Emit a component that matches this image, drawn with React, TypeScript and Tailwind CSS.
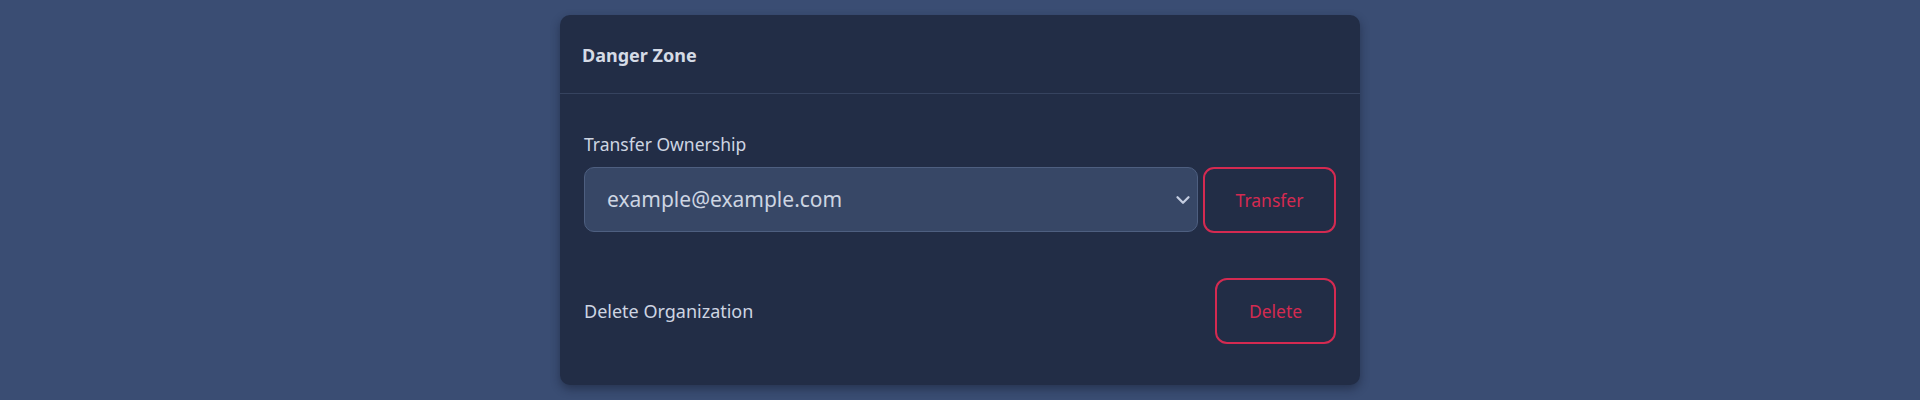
import React from 'react';
import { ChevronDown } from 'lucide-react';

const App: React.FC = () => {
  return (
    <div className="min-h-[400px] w-full bg-[#3a4d73] pt-[15px] font-['Noto_Sans','Open_Sans',sans-serif]">
      <div className="mx-auto w-[800px] overflow-hidden rounded-[10px] bg-[#222d46] shadow-[0_4px_10px_rgba(15,22,40,0.45)]">
        <div className="flex h-[79px] items-center border-b border-[#36435f] px-[22px]">
          <h2 className="pt-[2px] text-[18px] font-bold text-[#d5dbe6]">Danger Zone</h2>
        </div>

        <div className="px-[24px] pt-[37px] pb-[41px]">
          <label className="block text-[17.5px] leading-[26px] text-[#ced5e2]">Transfer Ownership</label>
          <div className="mt-[10px] flex gap-[5px]">
            <div className="flex h-[65px] flex-1 items-center rounded-[10px] border border-[#4e5f80] bg-[#374766] pl-[22px] pr-[3px]">
              <span className="flex-1 text-[21px] text-[#cdd5e2]">example@example.com</span>
              <ChevronDown size={22} strokeWidth={2.5} className="text-[#c4cde0]" />
            </div>
            <button className="h-[66px] w-[133px] rounded-[11px] border-2 border-[#d42a51] text-[17.5px] text-[#d42a51]">
              Transfer
            </button>
          </div>

          <div className="mt-[45px] flex items-center justify-between">
            <span className="text-[18px] text-[#ced5e2]">Delete Organization</span>
            <button className="h-[66px] w-[121px] rounded-[12px] border-2 border-[#d42a51] text-[17.5px] text-[#d42a51]">
              Delete
            </button>
          </div>
        </div>
      </div>
    </div>
  );
};

export default App;
